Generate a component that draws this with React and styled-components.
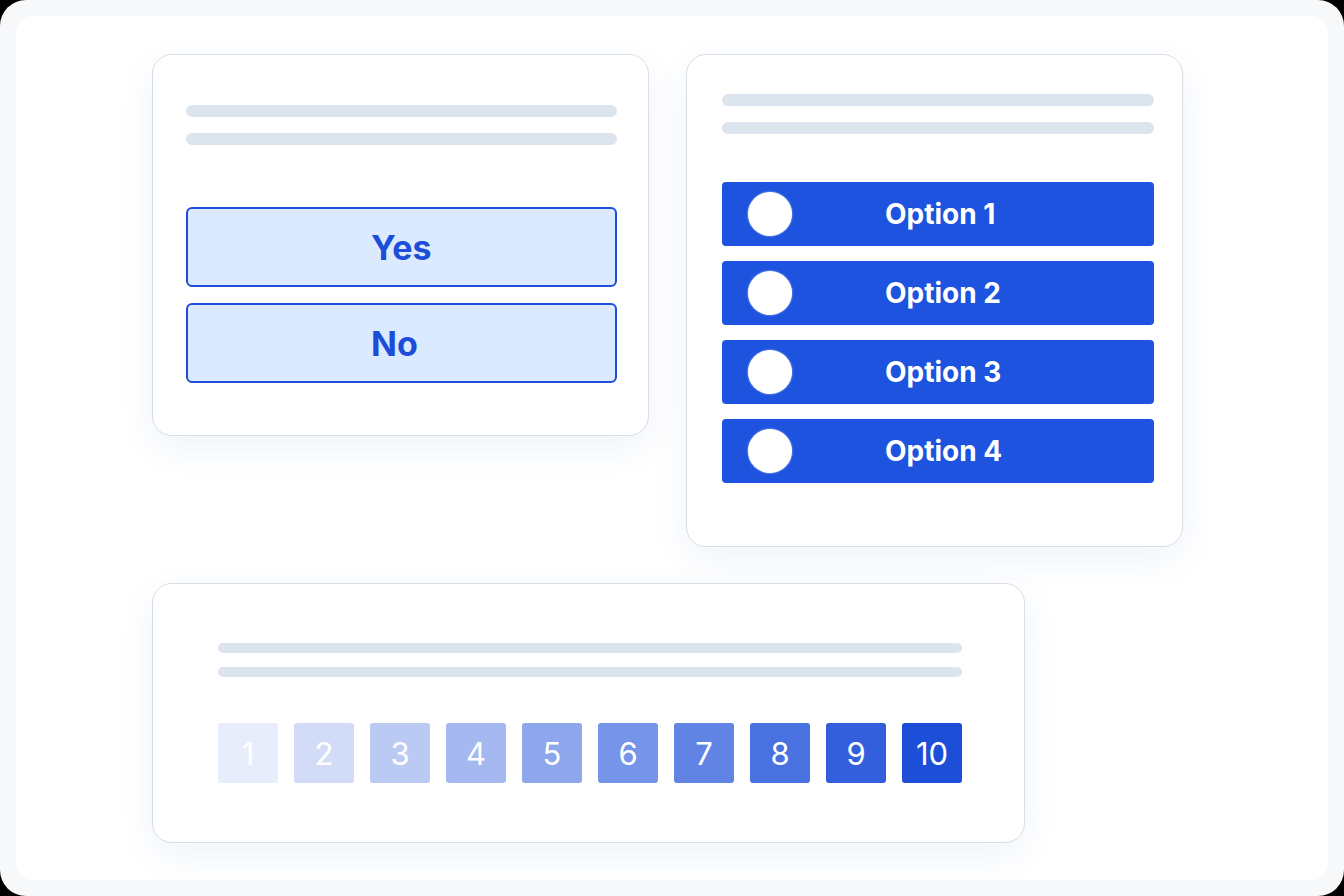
import React from "react";
import styled, { createGlobalStyle } from "styled-components";

const Global = createGlobalStyle`
  html, body { margin: 0; padding: 0; background: #000; }
  body { font-family: Inter, "Noto Sans", sans-serif; }
  * { box-sizing: border-box; }
`;

const Frame = styled.div`
  width: 1344px;
  height: 896px;
  background: #f7f8fa;
  border-radius: 26px;
  padding: 16px;
`;

const Panel = styled.div`
  width: 100%;
  height: 100%;
  background: #ffffff;
  border-radius: 16px;
  padding: 38px 0 0 136px;
  display: grid;
  grid-template-columns: 497px 497px;
  column-gap: 37px;
  row-gap: 36px;
  align-items: start;
  align-content: start;
`;

const Card = styled.div`
  background: #fff;
  border: 1.5px solid #d8dee6;
  border-radius: 20px;
  box-shadow: 0 12px 36px rgba(40, 80, 180, 0.07);
  display: flex;
  flex-direction: column;
  padding: ${(p) => p.$pad};
  ${(p) => p.$wide && "grid-column: 1 / span 2; width: 873px;"}
`;

const Lines = styled.div`
  display: flex;
  flex-direction: column;
  gap: ${(p) => p.$gap}px;
  margin-bottom: ${(p) => p.$after}px;
`;

const Line = styled.div`
  height: ${(p) => p.$h}px;
  background: #dce4ee;
  border-radius: 6px;
`;

const Stack = styled.div`
  display: flex;
  flex-direction: column;
  gap: ${(p) => p.$gap}px;
`;

const Choice = styled.div`
  height: 80px;
  background: #dbeafe;
  border: 2px solid #1d4ed8;
  border-radius: 6px;
  display: flex;
  align-items: center;
  padding-left: 183px;
  color: #1d4ed8;
  font-size: 34px;
  font-weight: 700;
`;

const Option = styled.div`
  height: 64px;
  background: #1d53de;
  border-radius: 4px;
  display: flex;
  align-items: center;
  padding-left: 26px;
  color: #fff;
  font-size: 28px;
  font-weight: 700;
`;

const Radio = styled.span`
  width: 44px;
  height: 44px;
  border-radius: 50%;
  background: #fff;
  box-shadow: 0 0 2px rgba(255, 255, 255, 0.8);
  margin-right: 93px;
  flex: none;
`;

const Scale = styled.div`
  display: flex;
  gap: 16px;
`;

const Cell = styled.div`
  width: 60px;
  height: 60px;
  border-radius: 3px;
  display: flex;
  align-items: center;
  justify-content: center;
  color: #fff;
  font-size: 31px;
  font-weight: 400;
`;

export default function App() {
  return (
    <>
      <Global />
      <Frame>
        <Panel>
          <Card $pad="50px 31px 52px 33px">
            <Lines $gap={16} $after={62}>
              <Line $h={12} />
              <Line $h={12} />
            </Lines>
            <Stack $gap={16}>
              <Choice>Yes</Choice>
              <Choice>No</Choice>
            </Stack>
          </Card>
          <Card $pad="39px 28px 63px 35px">
            <Lines $gap={16} $after={48}>
              <Line $h={12} />
              <Line $h={12} />
            </Lines>
            <Stack $gap={15}>
              {[1, 2, 3, 4].map((n) => (
                <Option key={n}>
                  <Radio />
                  Option {n}
                </Option>
              ))}
            </Stack>
          </Card>
          <Card $wide $pad="59px 62px 59px 65px">
            <Lines $gap={14} $after={46}>
              <Line $h={10} />
              <Line $h={10} />
            </Lines>
            <Scale>
              {Array.from({ length: 10 }, (_, i) => (
                <Cell
                  key={i}
                  style={{ background: `rgba(29, 78, 216, ${(i + 1) / 10})` }}
                >
                  {i + 1}
                </Cell>
              ))}
            </Scale>
          </Card>
        </Panel>
      </Frame>
    </>
  );
}
